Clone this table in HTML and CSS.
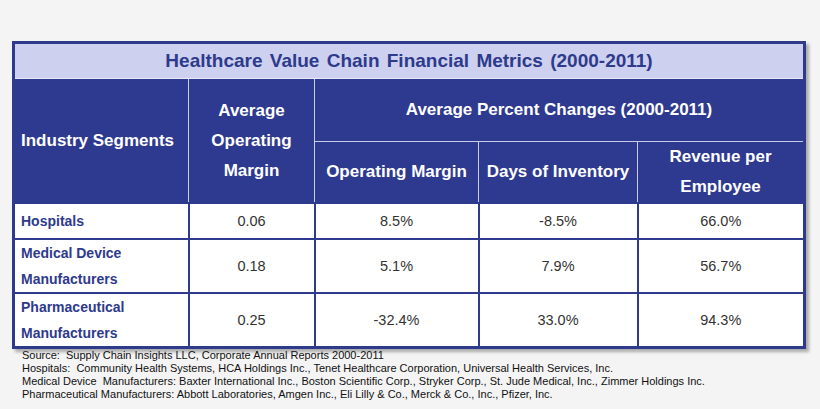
FILE: index.html
```html
<!DOCTYPE html>
<html>
<head>
<meta charset="utf-8">
<link rel="stylesheet" href="styles.css">
</head>
<body>
<div class="page">
  <table class="metrics">
    <colgroup>
      <col class="c1"><col class="c2"><col class="c3"><col class="c4"><col class="c5">
    </colgroup>
    <tr class="title-row">
      <th colspan="5" class="title">Healthcare Value Chain Financial Metrics (2000-2011)</th>
    </tr>
    <tr class="head1">
      <th rowspan="2" class="hd">Industry Segments</th>
      <th rowspan="2" class="hd">Average<br>Operating<br>Margin</th>
      <th colspan="3" class="hd">Average Percent Changes (2000-2011)</th>
    </tr>
    <tr class="head2">
      <th class="hd">Operating Margin</th>
      <th class="hd">Days of Inventory</th>
      <th class="hd">Revenue per<br>Employee</th>
    </tr>
    <tr class="r1">
      <td class="seg">Hospitals</td>
      <td>0.06</td><td>8.5%</td><td>-8.5%</td><td>66.0%</td>
    </tr>
    <tr class="r2">
      <td class="seg">Medical Device<br>Manufacturers</td>
      <td>0.18</td><td>5.1%</td><td>7.9%</td><td>56.7%</td>
    </tr>
    <tr class="r3">
      <td class="seg">Pharmaceutical<br>Manufacturers</td>
      <td>0.25</td><td>-32.4%</td><td>33.0%</td><td>94.3%</td>
    </tr>
  </table>
  <div class="notes">
    <p>Source:&nbsp; Supply Chain Insights LLC, Corporate Annual Reports 2000-2011</p>
    <p>Hospitals:&nbsp; Community Health Systems, HCA Holdings Inc., Tenet Healthcare Corporation, Universal Health Services, Inc.</p>
    <p>Medical Device&nbsp; Manufacturers: Baxter International Inc., Boston Scientific Corp., Stryker Corp., St. Jude Medical, Inc., Zimmer Holdings Inc.</p>
    <p>Pharmaceutical Manufacturers: Abbott Laboratories, Amgen Inc., Eli Lilly &amp; Co., Merck &amp; Co., Inc., Pfizer, Inc.</p>
  </div>
</div>
</body>
</html>
```

FILE: styles.css
```css
html, body {
  margin: 0;
  padding: 0;
  background: #f4f4f4;
}
.page {
  padding: 41px 0 0 12px;
  font-family: "Liberation Sans", Arial, sans-serif;
}
.metrics {
  border-collapse: collapse;
  width: 791px;
  border: 3px solid #2e3a8c;
  box-shadow: 3px 3px 3px rgba(0, 0, 0, 0.3);
  table-layout: fixed;
}
.c1 { width: 175px; }
.c2 { width: 126px; }
.c3 { width: 164px; }
.c4 { width: 159px; }
.c5 { width: 167px; }
th, td { padding: 0; }
.title {
  background: #cdd0ee;
  color: #2e3a8c;
  font-size: 19px;
  font-weight: bold;
  word-spacing: 2px;
  height: 34px;
  border-bottom: 1px solid #e6e8f6;
  text-align: center;
}
.hd {
  background: #2e3a8f;
  color: #ffffff;
  font-size: 17px;
  font-weight: bold;
  line-height: 30px;
  text-align: center;
  border: 1px solid #c9cdea;
}
.head1 { height: 63px; }
.head2 { height: 60px; }
.head1 .hd:first-child { text-align: left; padding-left: 6px; }
td {
  background: #ffffff;
  border: 2px solid #2e3a8c;
  text-align: center;
  font-size: 14.5px;
  color: #333333;
  line-height: 26px;
}
td.seg {
  text-align: left;
  padding-left: 6px;
  color: #2e3a8c;
  font-size: 14px;
  font-weight: bold;
}
.r1 { height: 36px; }
.r2 { height: 53px; }
.r3 { height: 50px; }
.notes {
  margin: 0 0 0 10px;
  font-size: 11px;
  line-height: 13px;
  color: #111111;
}
.notes p { margin: 0; }
```
